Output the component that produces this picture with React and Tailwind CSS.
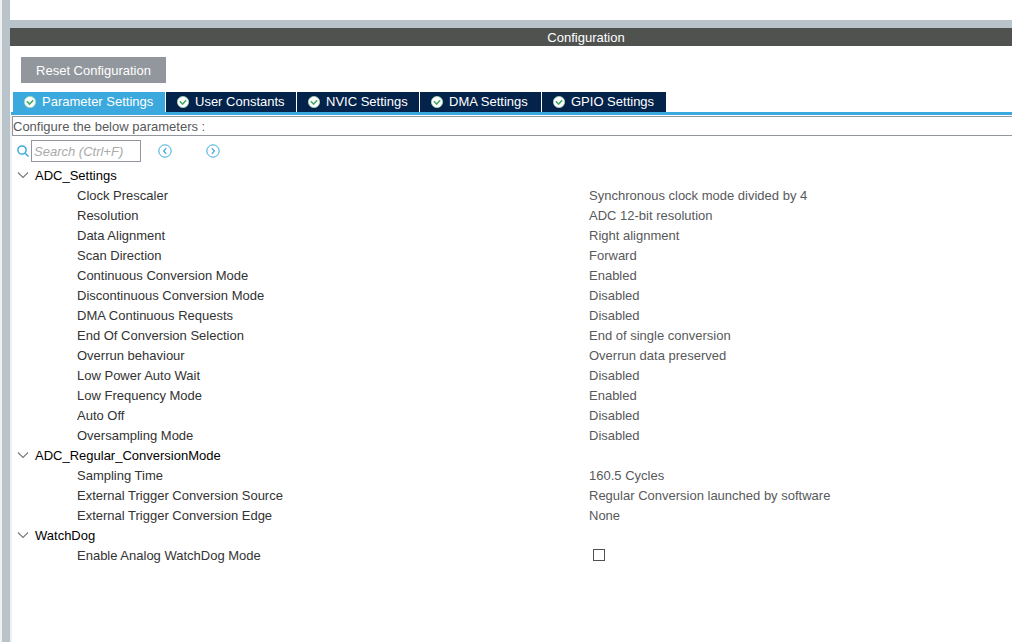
import { useState } from "react";

const TABS = [
  { label: "Parameter Settings", width: "w-[152px]" },
  { label: "User Constants", width: "w-[130px]" },
  { label: "NVIC Settings", width: "w-[122px]" },
  { label: "DMA Settings", width: "w-[121px]" },
  { label: "GPIO Settings", width: "w-[124px]" },
];

const GROUPS = [
  {
    name: "ADC_Settings",
    rows: [
      ["Clock Prescaler", "Synchronous clock mode divided by 4"],
      ["Resolution", "ADC 12-bit resolution"],
      ["Data Alignment", "Right alignment"],
      ["Scan Direction", "Forward"],
      ["Continuous Conversion Mode", "Enabled"],
      ["Discontinuous Conversion Mode", "Disabled"],
      ["DMA Continuous Requests", "Disabled"],
      ["End Of Conversion Selection", "End of single conversion"],
      ["Overrun behaviour", "Overrun data preserved"],
      ["Low Power Auto Wait", "Disabled"],
      ["Low Frequency Mode", "Enabled"],
      ["Auto Off", "Disabled"],
      ["Oversampling Mode", "Disabled"],
    ],
  },
  {
    name: "ADC_Regular_ConversionMode",
    rows: [
      ["Sampling Time", "160.5 Cycles"],
      ["External Trigger Conversion Source", "Regular Conversion launched by software"],
      ["External Trigger Conversion Edge", "None"],
    ],
  },
  {
    name: "WatchDog",
    rows: [["Enable Analog WatchDog Mode", null]],
  },
];

function CheckBadge() {
  return (
    <svg className="size-3 shrink-0" viewBox="0 0 12 12" fill="none" aria-hidden="true">
      <circle cx="6" cy="6" r="5.6" fill="#fff" stroke="#a5dab6" strokeWidth="0.8" />
      <path d="M2.8 5.2 5.6 8 9.2 4.2" stroke="#43ab6b" strokeWidth="1.6" />
    </svg>
  );
}

function CircleArrow({ path }) {
  return (
    <svg className="size-[14px]" viewBox="0 0 14 14" fill="none" stroke="#3ba9dd" aria-hidden="true">
      <circle cx="7" cy="7" r="6.2" strokeWidth="1" />
      <path d={path} strokeWidth="1.2" />
    </svg>
  );
}

function Group({ group }) {
  const [open, setOpen] = useState(true);
  return (
    <tbody>
      <tr className="h-5">
        <th colSpan={2} scope="rowgroup" className="p-0 text-left font-normal text-black">
          <button
            type="button"
            aria-expanded={open}
            onClick={() => setOpen(!open)}
            className="flex h-5 items-center gap-[6px] pl-[5px]"
          >
            <svg
              className={open ? "h-3 w-3" : "h-3 w-3 -rotate-90"}
              viewBox="0 0 12 12"
              fill="none"
              stroke="#777"
              strokeWidth="1.1"
              aria-hidden="true"
            >
              <path d="M1 3.5 6 8.5 11 3.5" />
            </svg>
            <span className="pt-[2px] leading-[18px]">{group.name}</span>
          </button>
        </th>
      </tr>
      {open &&
        group.rows.map(([name, value]) => (
          <tr key={name} className="h-5">
            <th scope="row" className="p-0 pt-[2px] pl-[65px] text-left leading-[18px] font-normal text-[#333]">
              {value === null ? <label htmlFor="watchdog">{name}</label> : name}
            </th>
            <td className={value === null ? "p-0" : "p-0 pt-[2px] leading-[18px]"}>
              {value === null ? (
                <input
                  id="watchdog"
                  type="checkbox"
                  className="ml-1 block size-3 appearance-none border border-[#505050] bg-white checked:bg-[#3ba9dd]"
                />
              ) : (
                value
              )}
            </td>
          </tr>
        ))}
    </tbody>
  );
}

export default function App() {
  const [active, setActive] = useState(0);
  return (
    <div className="flex min-h-screen bg-white pl-[2px] font-['Liberation_Sans',Arial,sans-serif] text-[13px] leading-5 text-[#58595b] shadow-[inset_2px_0_0_#f0f0f0]">
      <div className="w-2 shrink-0 bg-[#b8c4ca]" />
      <div className="flex min-w-0 grow flex-col">
        <div className="h-5 shrink-0" />
        <div className="h-2 shrink-0 bg-[#b8c4ca]" />
        <h1 className="flex h-[18px] shrink-0 items-center justify-center bg-[#505250] pt-[2px] pl-[150px] leading-4 text-white">
          Configuration
        </h1>
        <div className="px-[11px] pt-[11px] pb-[9px]">
          <button type="button" className="block h-[26px] w-[145px] bg-[#91979d] pt-[2px] text-white">
            Reset Configuration
          </button>
        </div>
        <div className="ml-px border-b-[3px] border-[#3ba9dd]">
          <div role="tablist" className="flex gap-px pl-[2px]">
            {TABS.map((tab, i) => (
              <button
                key={tab.label}
                type="button"
                role="tab"
                aria-selected={i === active}
                onClick={() => setActive(i)}
                className={`flex h-5 items-center gap-[6px] pl-[11px] whitespace-nowrap text-white ${tab.width} ${
                  i === active ? "bg-[#3ba9dd]" : "bg-[#03234b]"
                }`}
              >
                <CheckBadge />
                {tab.label}
              </button>
            ))}
          </div>
        </div>
        <main className="grow border-l-2 border-[#f0f0f0] pt-px">
          <p className="flex h-5 items-center border border-r-0 border-[#91979d] pt-[2px] leading-4">
            Configure the below parameters :
          </p>
          <div className="flex items-center pt-1 pb-[3px] pl-[5px]">
            <label htmlFor="search" aria-label="Search" className="pr-[2px]">
              <svg className="size-3" viewBox="0 0 12 12" fill="none" stroke="#3ba9dd" strokeWidth="1.5">
                <circle cx="5" cy="5" r="4.1" />
                <path d="m8 8 3.5 3.5" />
              </svg>
            </label>
            <input
              id="search"
              type="text"
              placeholder="Search (Ctrl+F)"
              className="h-[22px] w-[110px] border border-[#91979d] bg-white px-[2px] outline-none placeholder:text-[#aaa] placeholder:italic"
            />
            <div className="flex gap-[34px] pl-[17px]">
              <button type="button" aria-label="Previous match">
                <CircleArrow path="M8.2 4.2 5.6 7l2.6 2.8" />
              </button>
              <button type="button" aria-label="Next match">
                <CircleArrow path="M5.8 4.2 8.4 7 5.8 9.8" />
              </button>
            </div>
          </div>
          <table className="w-full table-fixed border-collapse">
            <colgroup>
              <col className="w-[577px]" />
              <col />
            </colgroup>
            {GROUPS.map((group) => (
              <Group key={group.name} group={group} />
            ))}
          </table>
        </main>
      </div>
    </div>
  );
}
